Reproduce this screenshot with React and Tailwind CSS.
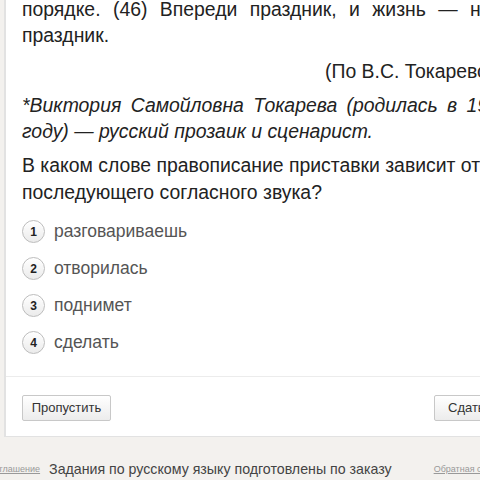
import React from "react";

const Circle = ({ n }) => (
  <div className="w-[23px] h-[23px] rounded-full border border-[#bdbdbd] bg-gradient-to-b from-white to-[#ebebeb] shadow-[inset_0_1px_1px_rgba(255,255,255,0.9)] flex items-center justify-center text-[12px] font-bold text-[#222] shrink-0">
    {n}
  </div>
);

const options = ["разговариваешь", "отворилась", "поднимет", "сделать"];

export default function App() {
  return (
    <div className="w-[480px] h-[480px] overflow-hidden bg-[#f3f1ee] font-['Liberation_Sans',Arial,sans-serif] relative">
      <div className="ml-[4px] w-[700px] h-[437px] bg-white border-l-2 border-b border-[#e2e2e2] pl-[16px] flex flex-col">
        <div className="text-[19.4px] leading-[26px] text-[#222] mt-[-4px]">
          <div className="whitespace-nowrap [word-spacing:7px]">порядке. (46) Впереди праздник, и жизнь — не так уж плохо.</div>
          <div>праздник.</div>
        </div>
        <div className="text-[19.4px] leading-[26px] text-[#222] mt-[10px] pl-[303px] whitespace-nowrap">(По В.С. Токаревой)</div>
        <div className="text-[19.4px] leading-[26px] text-[#222] italic mt-[8px]">
          <div className="whitespace-nowrap [word-spacing:4px]">*Виктория Самойловна Токарева (родилась в 1937 году)</div>
          <div className="whitespace-nowrap">году) — русский прозаик и сценарист.</div>
        </div>
        <div className="text-[19.4px] leading-[27px] text-[#222] mt-[8px]">
          <div className="whitespace-nowrap">В каком слове правописание приставки зависит от глухости–звонкости</div>
          <div className="whitespace-nowrap">последующего согласного звука?</div>
        </div>
        <div className="flex flex-col gap-[14px] mt-[14px]">
          {options.map((o, i) => (
            <div key={i} className="flex items-center gap-[9px] h-[23px]">
              <Circle n={i + 1} />
              <span className="text-[17.5px] text-[#555]">{o}</span>
            </div>
          ))}
        </div>
        <div className="mt-[22px] ml-[-16px] border-t border-[#ececec] w-full" />
        <div className="flex mt-[18px] w-[492px] justify-between">
          <button className="h-[26px] w-[89px] border border-[#c8c8c8] rounded-[2px] bg-gradient-to-b from-white to-[#ececec] text-[13px] text-[#333]">Пропустить</button>
          <button className="h-[26px] w-[80px] border border-[#c8c8c8] rounded-[2px] bg-gradient-to-b from-white to-[#ececec] text-[13px] text-[#333] pl-[13px] text-left">Сдать</button>
        </div>
      </div>
      <div className="flex items-end mt-[20px] h-[23px] whitespace-nowrap">
        <span className="text-[9px] text-[#999] underline ml-[-12px] mb-[4px]">Соглашение</span>
        <span className="text-[14.2px] text-[#444] ml-[9px]">Задания по русскому языку подготовлены по заказу</span>
        <span className="text-[9px] text-[#999] underline ml-[42px] mb-[4px]">Обратная связь</span>
      </div>
    </div>
  );
}
